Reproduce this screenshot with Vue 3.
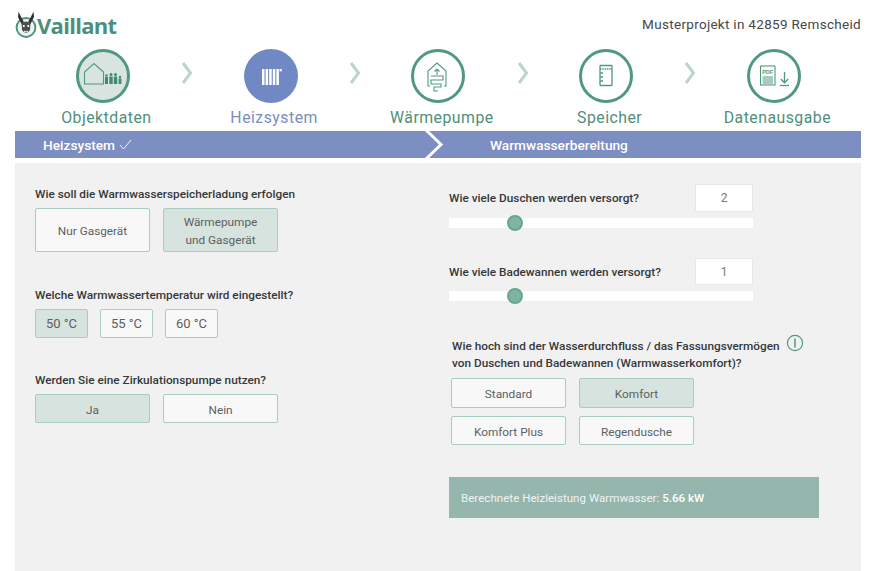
<script setup>
const leadOptions = [
  { label: 'Nur Gasgerät', on: false },
  { label: 'Wärmepumpe\nund Gasgerät', on: true },
]
const temps = [
  { label: '50 °C', on: true },
  { label: '55 °C', on: false },
  { label: '60 °C', on: false },
]
const comfortA = [
  { label: 'Standard', on: false },
  { label: 'Komfort', on: true },
]
const comfortB = [
  { label: 'Komfort Plus', on: false },
  { label: 'Regendusche', on: false },
]
</script>

<template>
  <div class="page">
    <header class="top">
      <div class="logo">
        <svg class="hare" width="22" height="28" viewBox="0 0 22 28">
          <circle cx="11" cy="16.5" r="9.4" fill="#eef3f1" stroke="#4f9580" stroke-width="2" />
          <path d="M8.8 11 L3.5 0.8 L3 6 L6.5 13 Z M13.2 11 L18.5 0.8 L19 6 L15.5 13 Z" fill="#2d3331" />
          <path d="M6.5 12 Q11 9 15.5 12 L15 19 Q11 25 7 19 Z" fill="#4a4f4d" />
          <circle cx="8.8" cy="15" r="1.1" fill="#fff" />
          <circle cx="13.2" cy="15" r="1.1" fill="#fff" />
          <path d="M9 20 Q11 22 13 20" fill="none" stroke="#fff" stroke-width="1" />
        </svg>
        <span class="logo-text">Vaillant</span>
      </div>
      <div class="project">Musterprojekt in 42859 Remscheid</div>
    </header>

    <nav class="steps">
      <div class="step">
        <svg width="54" height="54" viewBox="0 0 54 54">
          <circle cx="27" cy="27" r="25.5" fill="#d9e4e0" stroke="#4f9a7f" stroke-width="3" />
          <path d="M8.5 35 V23 L18 14.5 L27.5 23 V35 Z" fill="none" stroke="#4f9a7f" stroke-width="1.1" />
          <g fill="#3f8a70">
            <circle cx="30.5" cy="26.5" r="1.3" /><rect x="29" y="28" width="3" height="7" />
            <circle cx="35" cy="25.5" r="1.5" /><rect x="33.3" y="27.5" width="3.4" height="7.5" />
            <circle cx="39.5" cy="25.5" r="1.5" /><rect x="37.8" y="27.5" width="3.4" height="7.5" />
            <circle cx="44" cy="28" r="1.2" /><rect x="42.6" y="29.5" width="2.8" height="5.5" />
          </g>
        </svg>
        <span class="step-label">Objektdaten</span>
        <svg class="chev" width="12" height="24" viewBox="0 0 12 24"><polyline points="2,2 9.5,12 2,22" fill="none" stroke="#bad6cb" stroke-width="3" /></svg>
      </div>
      <div class="step active">
        <svg width="54" height="54" viewBox="0 0 54 54">
          <circle cx="27" cy="27" r="27" fill="#7088c4" />
          <g fill="#fff">
            <rect x="18" y="20" width="2.5" height="16" />
            <rect x="21.6" y="20" width="2.5" height="16" />
            <rect x="25.2" y="20" width="2.5" height="16" />
            <rect x="28.8" y="20" width="2.5" height="16" />
            <rect x="32.4" y="20" width="2.5" height="16" />
            <rect x="35.6" y="20" width="2.2" height="2.4" />
          </g>
        </svg>
        <span class="step-label">Heizsystem</span>
        <svg class="chev" width="12" height="24" viewBox="0 0 12 24"><polyline points="2,2 9.5,12 2,22" fill="none" stroke="#bad6cb" stroke-width="3" /></svg>
      </div>
      <div class="step">
        <svg width="54" height="54" viewBox="0 0 54 54">
          <circle cx="27" cy="27" r="25.5" fill="#fff" stroke="#4f9a7f" stroke-width="3" />
          <g fill="none" stroke="#4f9a7f" stroke-width="1.1" transform="translate(-1 0)">
            <path d="M20 37 H18 V22 L27 14 L36 22 V37 H34" />
            <path d="M27 26 V20 M24.5 22.5 L27 20 L29.5 22.5" />
            <path d="M21 27 H33 V31 H21 V35 H31 V38 H24 V42 H28" />
          </g>
        </svg>
        <span class="step-label">Wärmepumpe</span>
        <svg class="chev" width="12" height="24" viewBox="0 0 12 24"><polyline points="2,2 9.5,12 2,22" fill="none" stroke="#bad6cb" stroke-width="3" /></svg>
      </div>
      <div class="step">
        <svg width="54" height="54" viewBox="0 0 54 54">
          <circle cx="27" cy="27" r="25.5" fill="#fff" stroke="#4f9a7f" stroke-width="3" />
          <g fill="none" stroke="#4f9a7f" stroke-width="1.3">
            <rect x="21" y="16.5" width="12" height="20" rx="0.5" />
            <path d="M21 20 H33" stroke-dasharray="1.5 0.8" />
            <path d="M21 24 H24 M21 28 H24 M21 32 H24" />
          </g>
        </svg>
        <span class="step-label">Speicher</span>
        <svg class="chev" width="12" height="24" viewBox="0 0 12 24"><polyline points="2,2 9.5,12 2,22" fill="none" stroke="#bad6cb" stroke-width="3" /></svg>
      </div>
      <div class="step">
        <svg width="54" height="54" viewBox="0 0 54 54">
          <circle cx="27" cy="27" r="25.5" fill="#fff" stroke="#4f9a7f" stroke-width="3" />
          <g fill="none" stroke="#4f9a7f" stroke-width="1.1">
            <rect x="13.5" y="17" width="14.5" height="19" />
            <path d="M15.5 28 H26 M15.5 30 H26 M15.5 32 H26 M15.5 34 H26" />
            <path d="M37.5 23 V33.5 M33.8 30 L37.5 33.8 L41.2 30" stroke-width="1.3" />
            <path d="M33 36.5 H42" stroke-width="1.3" />
          </g>
          <text x="15.2" y="25" class="pdf">PDF</text>
        </svg>
        <span class="step-label">Datenausgabe</span>
      </div>
    </nav>

    <div class="bar">
      <div class="bar-left">
        Heizsystem
        <svg class="tick" width="13" height="11" viewBox="0 0 13 11"><polyline points="1,6 4.5,10 12,1" fill="none" stroke="#fff" stroke-width="0.9" /></svg>
      </div>
      <div class="bar-right">Warmwasserbereitung</div>
      <svg class="bar-notch" width="22" height="27" viewBox="0 0 22 27">
        <polyline points="2,-1 17,13.5 2,28" fill="none" stroke="#fff" stroke-width="3" />
      </svg>
    </div>

    <main class="panel">
      <section class="col-left">
        <h3 class="q">Wie soll die Warmwasserspeicherladung erfolgen</h3>
        <div class="row wide tall">
          <button v-for="o in leadOptions" :key="o.label" class="opt" :class="{ on: o.on }">{{ o.label }}</button>
        </div>

        <h3 class="q gap-a">Welche Warmwassertemperatur wird eingestellt?</h3>
        <div class="row temps">
          <button v-for="o in temps" :key="o.label" class="opt" :class="{ on: o.on }">{{ o.label }}</button>
        </div>

        <h3 class="q gap-b">Werden Sie eine Zirkulationspumpe nutzen?</h3>
        <div class="row wide short">
          <button class="opt on">Ja</button>
          <button class="opt">Nein</button>
        </div>
      </section>

      <section class="col-right">
        <div class="count first">
          <h3 class="q">Wie viele Duschen werden versorgt?</h3>
          <div class="num">2</div>
        </div>
        <div class="track"><span class="thumb"></span></div>

        <div class="count second">
          <h3 class="q">Wie viele Badewannen werden versorgt?</h3>
          <div class="num">1</div>
        </div>
        <div class="track"><span class="thumb"></span></div>

        <div class="comfort">
          <h3 class="q two-line">Wie hoch sind der Wasserdurchfluss / das Fassungsvermögen<br />von Duschen und Badewannen (Warmwasserkomfort)?</h3>
          <svg class="info" width="18" height="18" viewBox="0 0 18 18">
            <circle cx="9" cy="9" r="7.6" fill="none" stroke="#4f9a7f" stroke-width="1.2" />
            <path d="M9 4.5 V13.5" stroke="#4f9a7f" stroke-width="1.5" />
          </svg>
        </div>
        <div class="row wide comfort-row a">
          <button v-for="o in comfortA" :key="o.label" class="opt" :class="{ on: o.on }">{{ o.label }}</button>
        </div>
        <div class="row wide comfort-row b">
          <button v-for="o in comfortB" :key="o.label" class="opt" :class="{ on: o.on }">{{ o.label }}</button>
        </div>

        <div class="result">Berechnete Heizleistung Warmwasser: <b>5.66 kW</b></div>
      </section>
    </main>
  </div>
</template>

<style scoped>
.page {
  width: 872px;
  height: 571px;
  overflow: hidden;
  background: #fff;
  font-family: Roboto, "Noto Sans", sans-serif;
  color: #3a3d3f;
  display: flex;
  flex-direction: column;
}
.top {
  height: 49px;
  padding: 0 11px 0 15px;
  display: flex;
  justify-content: space-between;
  align-items: flex-start;
}
.logo {
  display: flex;
  align-items: center;
  gap: 0;
  margin-top: 11px;
  height: 28px;
}
.hare { flex: none; }
.logo-text {
  font-family: "Open Sans", sans-serif;
  font-weight: 700;
  font-size: 22px;
  letter-spacing: -0.7px;
  color: #4b8f7c;
}
.project {
  margin-top: 15px;
  font-size: 13.5px;
  line-height: 18px;
  letter-spacing: 0.3px;
  color: #46484a;
}
.steps {
  display: grid;
  grid-template-columns: repeat(5, 167.75px);
  padding-left: 19px;
  height: 82px;
}
.step {
  position: relative;
  display: flex;
  flex-direction: column;
  align-items: center;
}
.step-label {
  margin: 4px 0 0 7px;
  font-size: 15.8px;
  line-height: 22px;
  letter-spacing: 0.5px;
  color: #4f8f7b;
  white-space: nowrap;
}
.step.active .step-label { color: #7b8dc0; }
.chev {
  position: absolute;
  left: 162px;
  top: 12px;
}
.pdf {
  font-family: "Liberation Sans", sans-serif;
  font-size: 5.5px;
  font-weight: 700;
  fill: #4f9a7f;
}
.bar {
  position: relative;
  margin: 0 11px 0 15px;
  height: 27px;
  flex: none;
  background: #7d8ec2;
  color: #fff;
  display: flex;
  align-items: center;
  font-size: 13.7px;
  font-weight: 500;
}
.bar-left { width: 412px; padding-left: 28px; box-sizing: border-box; }
.tick { margin-left: 1px; }
.bar-right { padding-left: 63px; }
.bar-notch {
  position: absolute;
  left: 409px;
  top: 0;
  overflow: visible;
}
.panel {
  margin: 5px 11px 0 15px;
  flex: 1;
  background: #f1f1f2;
  display: grid;
  grid-template-columns: 434px 1fr;
  padding-top: 21px;
  align-content: start;
}
.col-left { padding: 2px 0 0 20px; }
.q {
  margin: 0;
  font-size: 11.8px;
  line-height: 16px;
  font-weight: 500;
  color: #35383a;
  white-space: nowrap;
}
.row { display: flex; margin-top: 6px; }
.wide { gap: 13px; }
.wide .opt { width: 115px; }
.tall .opt { height: 44px; }
.short .opt { height: 29px; }
.temps { gap: 12px; }
.temps .opt { width: 53px; height: 29px; padding-top: 0; font-size: 13px; }
.gap-a { margin-top: 35px; }
.gap-b { margin-top: 34px; }
.opt {
  box-sizing: border-box;
  margin: 0;
  padding: 2px 0 0;
  background: #f8f8f8;
  border: 1px solid #a9cdc2;
  border-radius: 2px;
  font-family: inherit;
  font-size: 11.8px;
  line-height: 18px;
  color: #5c6062;
  white-space: pre-line;
  text-align: center;
}
.opt.on { background: #d6e3de; }
.count {
  display: flex;
  justify-content: space-between;
  align-items: center;
  width: 304px;
}
.first { height: 28px; }
.second { height: 27px; margin-top: 30px; }
.num {
  box-sizing: border-box;
  width: 58px;
  height: 100%;
  background: #fff;
  border: 1px solid #e8e8e8;
  text-align: center;
  font-size: 12px;
  line-height: 26px;
  color: #777;
}
.track {
  position: relative;
  width: 304px;
  height: 10px;
  margin-top: 6px;
  background: #fff;
}
.thumb {
  position: absolute;
  left: 58px;
  top: -3px;
  box-sizing: border-box;
  width: 16px;
  height: 16px;
  border-radius: 50%;
  background: #7fb3a4;
  border: 2px solid #64a793;
}
.comfort { position: relative; margin-top: 37px; padding-left: 3px; }
.two-line { line-height: 17px; }
.info { position: absolute; left: 337px; top: -4px; }
.comfort-row { margin-left: 2px; }
.comfort-row.a { margin-top: 6px; }
.comfort-row.a .opt { height: 30px; }
.comfort-row.b { margin-top: 8px; }
.comfort-row.b .opt { height: 29px; }
.result {
  margin-top: 32px;
  box-sizing: border-box;
  width: 370px;
  height: 41px;
  padding-left: 12px;
  background: #95b6ad;
  color: #eef4f2;
  font-size: 11.6px;
  line-height: 42px;
}
.result b { font-weight: 500; color: #fff; }
</style>

<style>
html, body { margin: 0; padding: 0; background: #fff; }
</style>
